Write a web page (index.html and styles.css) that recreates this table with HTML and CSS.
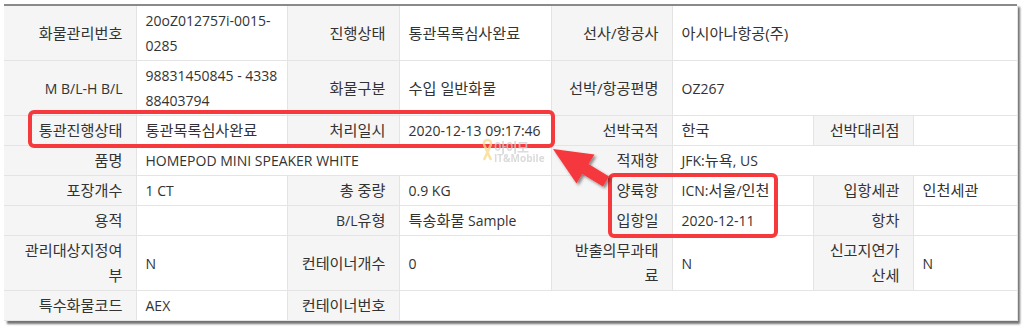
FILE: index.html
```html
<!DOCTYPE html>
<html lang="ko">
<head>
<meta charset="utf-8">
<title>화물통관 진행정보</title>
<link rel="stylesheet" href="styles.css">
</head>
<body>
<div class="sheet">
  <table class="cargo">
    <colgroup>
      <col class="c1"><col class="c2"><col class="c3"><col class="c4">
      <col class="c5"><col class="c6"><col class="c7"><col class="c8">
    </colgroup>
    <tbody>
      <tr>
        <th>화물관리번호</th>
        <td>20oZ012757i-0015-0285</td>
        <th>진행상태</th>
        <td class="ko">통관목록심사완료</td>
        <th>선사/항공사</th>
        <td colspan="3" class="ko">아시아나항공(주)</td>
      </tr>
      <tr>
        <th class="en">M B/L-H B/L</th>
        <td>98831450845 - 4338 88403794</td>
        <th>화물구분</th>
        <td class="ko">수입 일반화물</td>
        <th>선박/항공편명</th>
        <td colspan="3">OZ267</td>
      </tr>
      <tr>
        <th>통관진행상태</th>
        <td class="ko">통관목록심사완료</td>
        <th>처리일시</th>
        <td>2020-12-13 09:17:46</td>
        <th>선박국적</th>
        <td class="ko">한국</td>
        <th>선박대리점</th>
        <td></td>
      </tr>
      <tr>
        <th>품명</th>
        <td colspan="3">HOMEPOD MINI SPEAKER WHITE</td>
        <th>적재항</th>
        <td colspan="3">JFK:<span class="ko">뉴욕</span>, US</td>
      </tr>
      <tr>
        <th>포장개수</th>
        <td>1 CT</td>
        <th>총 중량</th>
        <td>0.9 KG</td>
        <th>양륙항</th>
        <td>ICN:<span class="ko">서울</span>/<span class="ko">인천</span></td>
        <th>입항세관</th>
        <td class="ko">인천세관</td>
      </tr>
      <tr>
        <th>용적</th>
        <td></td>
        <th><span class="en">B/L</span>유형</th>
        <td><span class="ko">특송화물</span> Sample</td>
        <th>입항일</th>
        <td>2020-12-11</td>
        <th>항차</th>
        <td></td>
      </tr>
      <tr>
        <th>관리대상지정여부</th>
        <td>N</td>
        <th>컨테이너개수</th>
        <td>0</td>
        <th>반출의무과태료</th>
        <td>N</td>
        <th>신고지연가산세</th>
        <td>N</td>
      </tr>
      <tr>
        <th>특수화물코드</th>
        <td>AEX</td>
        <th>컨테이너번호</th>
        <td colspan="5"></td>
      </tr>
    </tbody>
  </table>

  <div class="callout callout-status"></div>
  <div class="callout callout-port"></div>

  <svg class="pointer" width="1024" height="329" viewBox="0 0 1024 329" aria-hidden="true">
    <defs>
      <filter id="pointer-shadow" x="-20%" y="-20%" width="140%" height="140%">
        <feDropShadow dx="2" dy="2" stdDeviation="1.6" flood-color="#000" flood-opacity="0.45"/>
      </filter>
    </defs>
    <polygon filter="url(#pointer-shadow)" fill="#f5393c"
      points="553,149 594.5,154.5 588.5,164 609,176.5 603,186.5 582.3,174 576.5,183.4"/>
  </svg>

  <div class="watermark">
    <svg class="ribbon" width="11" height="23" viewBox="0 0 11 23" aria-hidden="true">
      <path d="M5.5 2 C2.2 2 1.4 4.6 2.3 7.2 L8.6 21 M5.5 2 C8.8 2 9.6 4.6 8.7 7.2 L2.4 21" fill="none" stroke="#f6d98a" stroke-width="2.6" stroke-linecap="round"/>
    </svg>
    <div class="wm-text">
      <span class="wm-ko">아이모</span>
      <span class="wm-en">IT&amp;Mobile</span>
    </div>
  </div>
</div>
</body>
</html>
```

FILE: styles.css
```css
* { box-sizing: border-box; }

html, body {
  margin: 0;
  padding: 0;
  background: #ffffff;
}

body {
  font-family: "Open Sans", "Noto Sans CJK KR", sans-serif;
  font-size: 14px;
  color: #333333;
  width: 1024px;
  height: 329px;
  overflow: hidden;
}

/* framed capture of the cargo detail table */
.sheet {
  position: relative;
  width: 1013px;
  margin: 4px 0 0 4px;
  border-top: 2px solid #8a8a8a;
  background: #ffffff;
  box-shadow: 3px 3px 2px rgba(0, 0, 0, 0.55);
}

.cargo {
  width: 1013px;
  table-layout: fixed;
  border-collapse: collapse;
}

.cargo .c1 { width: 132px; }
.cargo .c2 { width: 151px; }
.cargo .c3 { width: 112px; }
.cargo .c4 { width: 152px; }
.cargo .c5 { width: 121px; }
.cargo .c6 { width: 141px; }
.cargo .c7 { width: 100px; }
.cargo .c8 { width: 104px; }

.cargo th,
.cargo td {
  border: 1px solid #e4e4e4;
  line-height: 25px;
  vertical-align: middle;
  font-weight: normal;
}

.cargo tr:first-child th,
.cargo tr:first-child td { border-top: 0; }
.cargo th:first-child { border-left: 0; }

/* labels: Korean text set a touch larger than the Latin values */
.cargo th {
  background: #f5f5f5;
  text-align: right;
  padding: 2px 13px 2px 12px;
  font-size: 15.2px;
}

.cargo td {
  background: #ffffff;
  text-align: left;
  padding: 2px 4px 2px 9px;
}

.cargo .en { font-size: 14px; }
.cargo .ko,
.cargo td.ko { font-size: 15.2px; }

/* red highlight frames */
.callout {
  position: absolute;
  border: 4px solid #f5393c;
  border-radius: 6px;
}

.callout-status {
  left: 24px;
  top: 104px;
  width: 527px;
  height: 38px;
}

.callout-port {
  left: 604px;
  top: 167px;
  width: 170px;
  height: 65px;
}

.pointer {
  position: absolute;
  left: -4px;
  top: -6px;
  pointer-events: none;
}

/* faded site stamp */
.watermark {
  position: absolute;
  left: 478px;
  top: 132px;
  display: flex;
  align-items: flex-start;
  gap: 1px;
  opacity: 0.75;
  pointer-events: none;
}

.wm-text {
  display: flex;
  flex-direction: column;
  align-items: flex-start;
  padding-top: 2px;
}

.wm-ko {
  font-family: "Noto Sans CJK KR", sans-serif;
  font-weight: 700;
  font-size: 13px;
  line-height: 13px;
  color: #cfcfcf;
  letter-spacing: -0.5px;
}

.wm-en {
  font-family: "Open Sans", sans-serif;
  font-weight: 700;
  font-size: 10px;
  line-height: 11px;
  color: #cfcfcf;
}
```
